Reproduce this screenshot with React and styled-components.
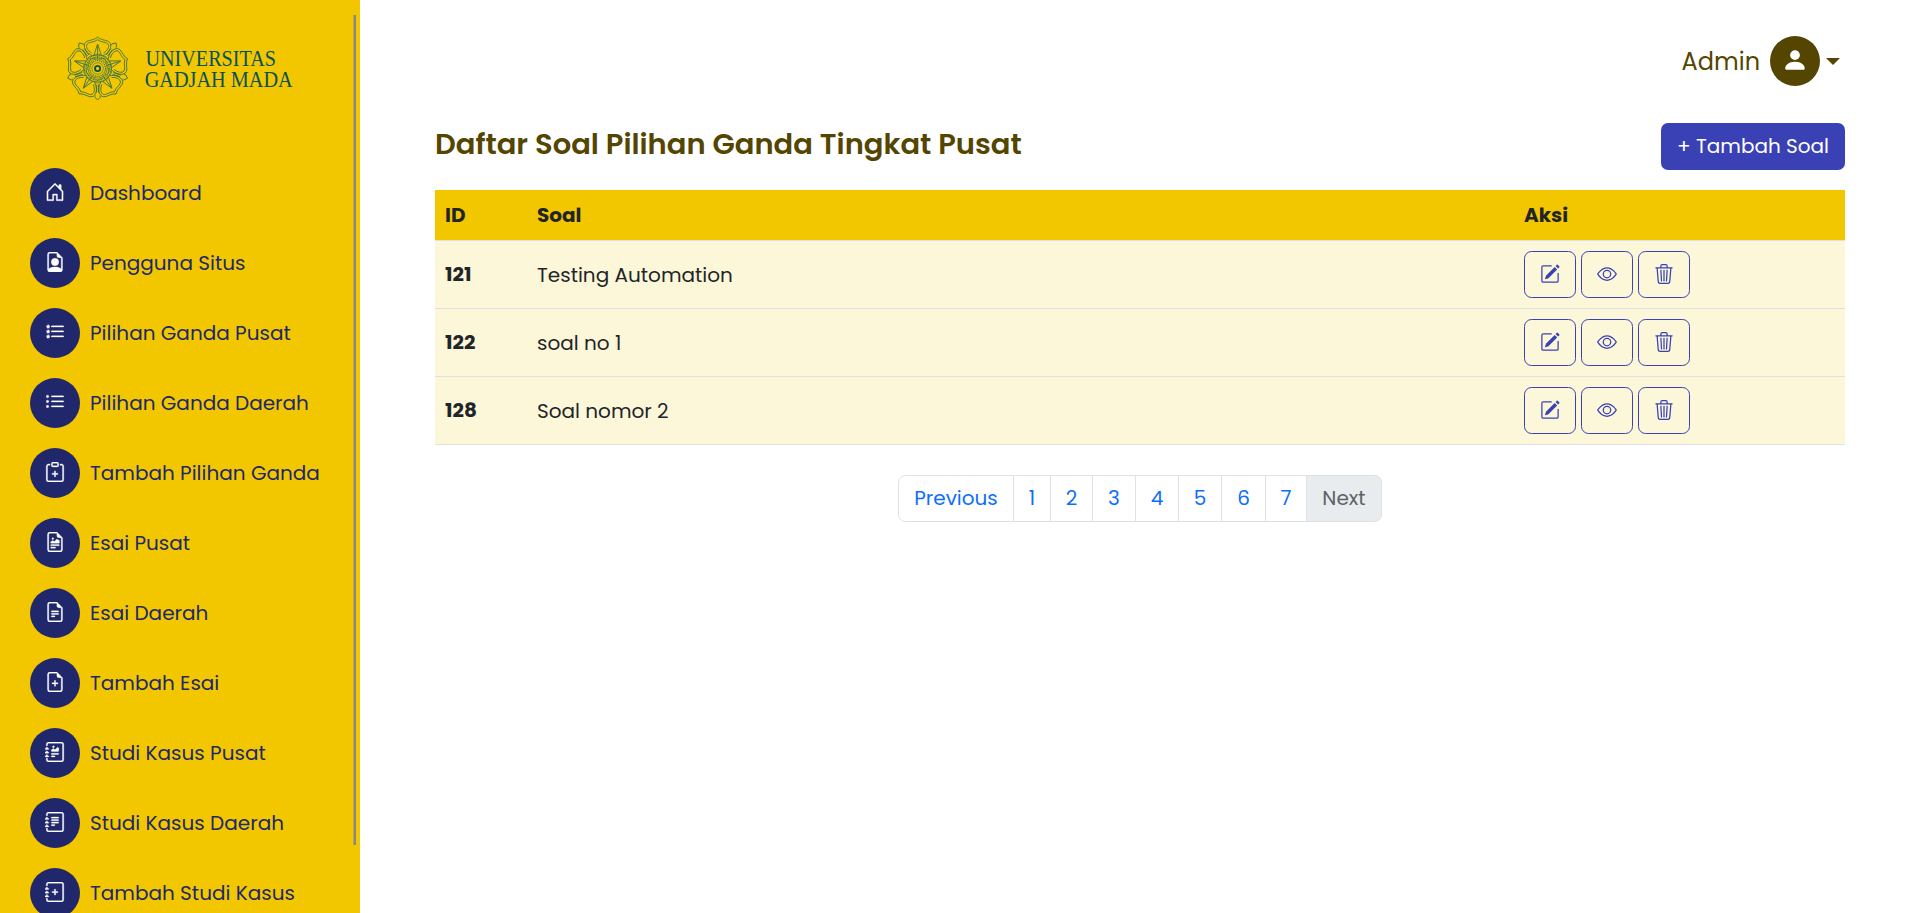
import React from "react";
import styled, { createGlobalStyle } from "styled-components";
import {
  BsHouseDoor,
  BsFileEarmarkPerson,
  BsListStars,
  BsListUl,
  BsClipboardPlus,
  BsFileEarmarkRichtext,
  BsFileEarmarkText,
  BsFileEarmarkPlus,
  BsJournalRichtext,
  BsJournalText,
  BsJournalPlus,
  BsPersonFill,
  BsPencilSquare,
  BsEye,
  BsTrash3,
} from "react-icons/bs";

const GlobalStyle = createGlobalStyle`
  * { box-sizing: border-box; }
  body {
    margin: 0;
    background: #fff;
    color: #212529;
    font-family: Poppins, Inter, "Liberation Sans", sans-serif;
    font-size: 20px;
    line-height: 30px;
    overflow: hidden;
  }
  svg { display: block; }
`;

const Page = styled.div`
  display: flex;
  height: 913px;
  overflow: hidden;
`;

const Sidebar = styled.aside`
  position: relative;
  flex: 0 0 360px;
  height: 913px;
  overflow: hidden;
  background: #f3c700;
`;

const ScrollThumb = styled.div`
  position: absolute;
  top: 15px;
  right: 4px;
  width: 2px;
  height: 830px;
  background: #888;
  box-shadow: -1px 0 0 rgba(136, 136, 136, 0.5);
`;

const LogoBox = styled.div`
  height: 168px;
  padding: 30px 0 0 60px;
`;

const Menu = styled.nav`
  display: flex;
  flex-direction: column;
  gap: 20px;
  padding-left: 30px;
`;

const MenuLink = styled.a`
  display: flex;
  flex: none;
  align-items: center;
  gap: 10px;
  height: 50px;
  color: #20276b;
  white-space: nowrap;
`;

const Circle = styled.span`
  display: flex;
  flex: none;
  align-items: center;
  justify-content: center;
  width: 50px;
  height: 50px;
  padding-bottom: 2px;
  border-radius: 50%;
  background: ${(p) => p.$color};
  color: #fff;
`;

const MenuIcon = styled.span`
  display: flex;
  svg {
    width: 20px;
    height: 20px;
    stroke: currentColor;
    stroke-width: 0.25px;
  }
`;

const Main = styled.main`
  display: flex;
  flex: 1;
  flex-direction: column;
  padding: 36px 75px 0;
`;

const UserMenu = styled.div`
  display: flex;
  align-items: center;
  align-self: flex-end;
  height: 50px;
  padding-right: 5px;
  color: #544500;
`;

const UserName = styled.span`
  margin-right: 10px;
  padding-top: 2px;
  font-size: 24px;
`;

const Caret = styled.span`
  margin-left: 6px;
  border-top: 7px solid #544500;
  border-left: 7px solid transparent;
  border-right: 7px solid transparent;
`;

const TitleBar = styled.header`
  display: flex;
  justify-content: space-between;
  height: 47px;
  margin: 37px 0 20px;
`;

const Title = styled.h1`
  margin: 0;
  color: #544500;
  font-size: 29px;
  font-weight: 600;
  line-height: 42px;
  white-space: nowrap;
`;

const AddButton = styled.button`
  width: 184px;
  height: 47px;
  padding: 0 0 2px;
  border: 0;
  border-radius: 7px;
  background: #3941b5;
  color: #fff;
  font: inherit;
  white-space: nowrap;
`;

const Table = styled.div`
  display: flex;
  flex-direction: column;
`;

const Row = styled.div`
  display: grid;
  grid-template-columns: 92px 987px 1fr;
  align-items: center;
  height: ${(p) => (p.$head ? 51 : 68)}px;
  padding-left: 10px;
  border-bottom: 1px solid #dee2e6;
  background: ${(p) => (p.$head ? "#f3c700" : "#fdf7d9")};
`;

const Cell = styled.div`
  font-weight: ${(p) => (p.$bold ? 700 : 400)};
  padding-bottom: ${(p) => p.$lift || 0}px;
`;

const Actions = styled.div`
  display: flex;
  gap: 5px;
`;

const ActionButton = styled.button`
  display: flex;
  align-items: center;
  justify-content: center;
  width: 52px;
  height: 47px;
  padding: 0 0 1px;
  border: 1px solid #3941b5;
  border-radius: 7.5px;
  background: transparent;
  color: #3941b5;
`;

const Pagination = styled.ul`
  display: flex;
  align-self: center;
  margin: 30px 0 0;
  padding: 0;
  list-style: none;
`;

const PageItem = styled.li`
  width: ${(p) => p.$width}px;
  height: 47px;
  border: 1px solid #dee2e6;
  border-left-width: 0;
  background: ${(p) => (p.$disabled ? "#e9ecef" : "#fff")};
  color: ${(p) => (p.$disabled ? "#5d6267" : "#0d6efd")};
  line-height: 45px;
  text-align: center;
  &:first-child {
    border-left-width: 1px;
    border-radius: 7.5px 0 0 7.5px;
  }
  &:last-child { border-radius: 0 7.5px 7.5px 0; }
`;

const turns = [0, 72, 144, 216, 288];

function Logo() {
  return (
    <svg width="240" height="80" viewBox="60 30 240 80" fill="none" stroke="#2f6c4c">
      <g transform="translate(97.6 68.5)" strokeWidth="0.8">
        {turns.map((a) => (
          <g key={a} transform={`rotate(${a})`}>
            <path d="M-5.5 -13C-10 -15 -14.5 -20 -12.8 -25C-11 -29 -4 -27.5 0 -31.5C4 -27.5 11 -29 12.8 -25C14.5 -20 10 -15 5.5 -13" />
            <path d="M-6 -15.5C-10 -18 -12 -21.5 -10.6 -24.2C-9 -27 -4 -25.5 0 -28.8C4 -25.5 9 -27 10.6 -24.2C12 -21.5 10 -18 6 -15.5" />
            <path d="M0 -24.5L-3.6 -13.5M0 -24.5L3.6 -13.5M0 -23V-9" />
            <g transform="rotate(36)">
              <path d="M-2.4 -27L-2.8 -28.5L0 -31.5L2.8 -28.5L2.4 -27M-0.9 -16V-24M0.9 -16V-24" />
              <path d="M-8 -12L0 -14.5L8 -12M-5 -9L0 -12L5 -9" strokeWidth="0.6" />
            </g>
          </g>
        ))}
        <circle r="13.5" strokeWidth="0.7" />
        <circle r="11.6" strokeDasharray="1.3 0.7" strokeWidth="1.1" />
        <circle r="9.6" strokeWidth="0.7" />
        <circle r="7.8" strokeDasharray="1.2 0.8" strokeWidth="1.1" />
        <circle r="5.7" strokeWidth="0.6" />
        <circle r="2.6" stroke="#07515a" strokeWidth="1.8" />
      </g>
      <g fill="#07515a" stroke="none" fontFamily="'Liberation Serif', serif" fontSize="23">
        <text x="145.5" y="65.5" textLength="130.5" lengthAdjust="spacingAndGlyphs">UNIVERSITAS</text>
        <text x="144.7" y="87" textLength="148" lengthAdjust="spacingAndGlyphs">GADJAH MADA</text>
      </g>
    </svg>
  );
}

const menu = [
  ["Dashboard", BsHouseDoor],
  ["Pengguna Situs", BsFileEarmarkPerson],
  ["Pilihan Ganda Pusat", BsListStars],
  ["Pilihan Ganda Daerah", BsListUl],
  ["Tambah Pilihan Ganda", BsClipboardPlus],
  ["Esai Pusat", BsFileEarmarkRichtext],
  ["Esai Daerah", BsFileEarmarkText],
  ["Tambah Esai", BsFileEarmarkPlus],
  ["Studi Kasus Pusat", BsJournalRichtext],
  ["Studi Kasus Daerah", BsJournalText],
  ["Tambah Studi Kasus", BsJournalPlus],
];

const questions = [
  { id: "121", text: "Testing Automation" },
  { id: "122", text: "soal no 1" },
  { id: "128", text: "Soal nomor 2" },
];

const pages = [
  ["Previous", 116],
  ["1", 37],
  ["2", 42],
  ["3", 43],
  ["4", 43],
  ["5", 43],
  ["6", 44],
  ["7", 41],
  ["Next", 75],
];

export default function App() {
  return (
    <Page>
      <GlobalStyle />
      <Sidebar>
        <LogoBox>
          <Logo />
        </LogoBox>
        <Menu>
          {menu.map(([label, Icon]) => (
            <MenuLink key={label}>
              <Circle $color="#20276b">
                <MenuIcon><Icon /></MenuIcon>
              </Circle>
              {label}
            </MenuLink>
          ))}
        </Menu>
        <ScrollThumb />
      </Sidebar>
      <Main>
        <UserMenu>
          <UserName>Admin</UserName>
          <Circle $color="#544500">
            <BsPersonFill size={26} />
          </Circle>
          <Caret />
        </UserMenu>
        <TitleBar>
          <Title>Daftar Soal Pilihan Ganda Tingkat Pusat</Title>
          <AddButton>+ Tambah Soal</AddButton>
        </TitleBar>
        <Table>
          <Row $head>
            <Cell $bold>ID</Cell>
            <Cell $bold>Soal</Cell>
            <Cell $bold>Aksi</Cell>
          </Row>
          {questions.map((q) => (
            <Row key={q.id}>
              <Cell $bold $lift={2}>{q.id}</Cell>
              <Cell>{q.text}</Cell>
              <Actions>
                <ActionButton><BsPencilSquare size={20} /></ActionButton>
                <ActionButton><BsEye size={20} /></ActionButton>
                <ActionButton><BsTrash3 size={20} /></ActionButton>
              </Actions>
            </Row>
          ))}
        </Table>
        <Pagination>
          {pages.map(([label, width]) => (
            <PageItem key={label} $width={width} $disabled={label === "Next"}>
              {label}
            </PageItem>
          ))}
        </Pagination>
      </Main>
    </Page>
  );
}
